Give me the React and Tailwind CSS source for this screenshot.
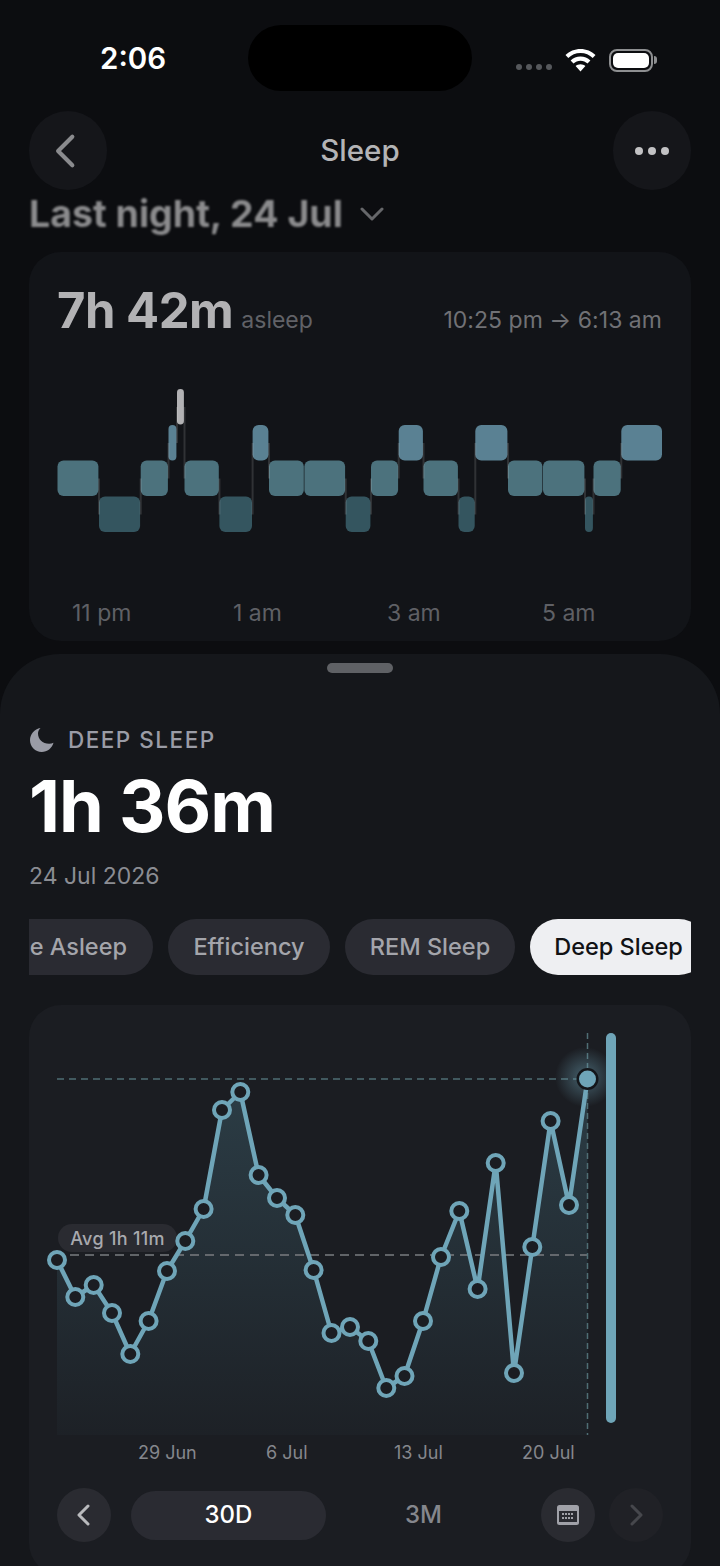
import React from 'react';

const levels = {
  awake: { y: 389, fill: '#b2b2b4' },
  rem: { y: 425, fill: '#5a8193' },
  light: { y: 460.5, fill: '#4c727d' },
  deep: { y: 496.5, fill: '#34555f' },
};

// sleep stages, x range in page pixels
const stages = [
  ['light', 57.5, 99], ['deep', 99, 140.7], ['light', 140.7, 168.5], ['rem', 168.5, 177],
  ['awake', 177, 184.5], ['light', 184.5, 219.4], ['deep', 219.4, 252.6], ['rem', 252.6, 269],
  ['light', 269, 304.4], ['light', 304.4, 345.7], ['deep', 345.7, 371], ['light', 371, 398.7],
  ['rem', 398.7, 423.5], ['light', 423.5, 458.5], ['deep', 458.5, 475.3], ['rem', 475.3, 508],
  ['light', 508, 543], ['light', 543, 585], ['deep', 585, 593.5], ['light', 593.5, 621.3],
  ['rem', 621.3, 662.6],
];

const points = [
  [57, 1260], [75.3, 1297], [93.7, 1285], [112, 1313], [130.3, 1354], [148.6, 1321], [167, 1271],
  [185.3, 1241], [203.6, 1209], [222, 1110], [240.3, 1092], [258.6, 1175], [277, 1198], [295.3, 1215],
  [313.6, 1270], [331.5, 1333], [350, 1327], [368.3, 1341], [386.3, 1388], [404.5, 1376], [423, 1321],
  [441, 1257], [459.3, 1211], [477.6, 1289], [495.7, 1163], [514, 1373], [532.3, 1247], [550.6, 1121],
  [569, 1205], [587.5, 1079],
];

function Hypnogram() {
  return (
    <svg width="608" height="160" viewBox="56 380 608 160" className="block">
      {stages.map(([level, x1, x2], i) => {
        const w = x2 - x1 - 0.6;
        return (
          <rect key={i} x={x1} y={levels[level].y} width={w} height="35.5" rx={Math.min(6, w / 2)} fill={levels[level].fill} />
        );
      })}
      {stages.slice(1).map(([level, x1], i) => {
        const prev = stages[i][0];
        if (prev === level) return null;
        return (
          <line key={i} x1={x1} x2={x1} y1={levels[prev].y + 18} y2={levels[level].y + 18} stroke="#ffffff" strokeOpacity="0.13" strokeWidth="2" />
        );
      })}
    </svg>
  );
}

function TrendChart() {
  const line = points.map((p) => p.join(',')).join(' ');
  const area = `57,1435 ${line} 587.5,1435`;
  return (
    <svg width="662" height="435" viewBox="29 1005 662 435" className="relative block">
      <defs>
        <linearGradient id="areaFill" x1="0" y1="1090" x2="0" y2="1435" gradientUnits="userSpaceOnUse">
          <stop offset="0" stopColor="#5f9fb4" stopOpacity="0.24" />
          <stop offset="1" stopColor="#5f9fb4" stopOpacity="0.03" />
        </linearGradient>
        <radialGradient id="glow">
          <stop offset="0.25" stopColor="#6fa5b8" stopOpacity="0.38" />
          <stop offset="1" stopColor="#6fa5b8" stopOpacity="0" />
        </radialGradient>
      </defs>
      <polygon points={area} fill="url(#areaFill)" />
      <line x1="57" x2="588" y1="1079" y2="1079" stroke="#4f6e74" strokeWidth="1.5" strokeDasharray="7 5" />
      <line x1="70" x2="588" y1="1255" y2="1255" stroke="#7a7c80" strokeWidth="1.5" strokeDasharray="9 6" />
      <line x1="587.5" x2="587.5" y1="1033" y2="1435" stroke="#4f6e74" strokeWidth="1.5" strokeDasharray="6 4" />
      <rect x="606" y="1033" width="10" height="390" rx="5" fill="#6fa5b8" />
      <circle cx="585" cy="1077" r="30" fill="url(#glow)" />
      <polyline points={line} fill="none" stroke="#6fa5b8" strokeWidth="4.5" strokeLinejoin="round" />
      {points.slice(0, -1).map(([x, y], i) => (
        <circle key={i} cx={x} cy={y} r="8" fill="#1b1d22" stroke="#6fa5b8" strokeWidth="4" />
      ))}
      <circle cx="587.5" cy="1079" r="11" fill="#14161a" />
      <circle cx="587.5" cy="1079" r="8.5" fill="#6fa5b8" />
    </svg>
  );
}

function Chevron({ dir = 'left', size = 22, color = '#fff', width = 3 }) {
  return (
    <svg width={size} height={size} viewBox="0 0 24 24" fill="none" stroke={color} strokeWidth={width} strokeLinecap="round" strokeLinejoin="round">
      <path d={dir === 'left' ? 'M16 3 7 12l9 9' : 'M8 3l9 9-9 9'} />
    </svg>
  );
}

export default function App() {
  return (
    <div className="w-[720px] h-[1566px] overflow-hidden bg-[#0c0d10] font-['Inter',sans-serif]">
      {/* status bar */}
      <div className="flex items-center pt-[25px]">
        <div className="w-[248px] pl-[100px] pt-[2px] text-[29.5px] leading-none font-semibold text-white">2:06</div>
        <div className="w-[224px] h-[66px] rounded-full bg-black" />
        <div className="flex items-center pl-[44px] pt-[4px]">
          <div className="flex gap-[4px] mt-[14px]">
            <span className="w-[6px] h-[6px] rounded-full bg-[#56585c]" />
            <span className="w-[6px] h-[6px] rounded-full bg-[#56585c]" />
            <span className="w-[6px] h-[6px] rounded-full bg-[#56585c]" />
            <span className="w-[6px] h-[6px] rounded-full bg-[#56585c]" />
          </div>
          <svg width="31" height="23" viewBox="0 0 31 23" className="ml-[13px]" fill="#fff">
            <path d="M15.5 0C9.7 0 4.4 2.3.5 6.1l2.8 3C6.4 6 10.7 4.1 15.5 4.1S24.6 6 27.7 9.1l2.8-3C26.6 2.3 21.3 0 15.5 0z" />
            <path d="M15.5 7.6c-3.8 0-7.3 1.5-9.9 4l2.9 3c1.8-1.7 4.3-2.8 7-2.8s5.2 1.1 7 2.8l2.9-3c-2.6-2.5-6.1-4-9.9-4z" />
            <path d="M15.5 15.2c-1.9 0-3.6.7-4.9 1.9l4.9 5.4 4.9-5.4c-1.3-1.2-3-1.9-4.9-1.9z" />
          </svg>
          <div className="ml-[13px] w-[44px] h-[23px] rounded-[8px] border-2 border-[#8e8f91] p-[2px]">
            <div className="w-full h-full rounded-[5px] bg-white" />
          </div>
          <div className="ml-[1px] w-[3px] h-[8px] rounded-r-full bg-[#8e8f91]" />
        </div>
      </div>

      {/* nav */}
      <div className="flex items-center justify-between px-[29px] mt-[20px]">
        <div className="w-[78px] h-[79px] rounded-full bg-[#15161a] flex items-center justify-center pr-[4px]">
          <Chevron size={38} color="#8a8b8e" width={2.6} />
        </div>
        <div className="text-[29.5px] leading-none font-medium text-[#b4b4b6]">Sleep</div>
        <div className="w-[78px] h-[79px] rounded-full bg-[#15161a] flex items-center justify-center gap-[5px]">
          <span className="w-[8px] h-[8px] rounded-full bg-[#c2c2c4]" />
          <span className="w-[8px] h-[8px] rounded-full bg-[#c2c2c4]" />
          <span className="w-[8px] h-[8px] rounded-full bg-[#c2c2c4]" />
        </div>
      </div>

      <div className="flex items-center h-[48px] pl-[29px]">
        <span className="text-[37.5px] leading-none font-bold text-[#8b8b8d] blur-[0.8px]">Last night, 24 Jul</span>
        <svg width="24" height="14" viewBox="0 0 24 14" fill="none" stroke="#66676a" strokeWidth="3" strokeLinecap="round" strokeLinejoin="round" className="ml-[17px]">
          <path d="M2 2l10 10L22 2" />
        </svg>
      </div>

      {/* last night card */}
      <div className="mx-[29px] mt-[14px] h-[389px] rounded-[32px] bg-[#121418] pl-[28px] pr-[29px] pt-[34px]">
        <div className="flex items-baseline justify-between h-[58px]">
          <div className="flex items-baseline">
            <span className="text-[49px] leading-none font-bold text-[#b2b2b4] tracking-[-0.5px]">7h 42m</span>
            <span className="ml-[8px] text-[23px] leading-none text-[#616267]">asleep</span>
          </div>
          <span className="text-[23px] leading-none text-[#707175] tracking-[0.03px]">10:25 pm → 6:13 am</span>
        </div>
        <div className="-ml-[1px] mt-[36px]">
          <Hypnogram />
        </div>
        <div className="flex pl-[15px] mt-[62px] text-[23px] leading-none text-[#5f6065]">
          <span className="w-[161px]">11 pm</span>
          <span className="w-[154px]">1 am</span>
          <span className="w-[155px]">3 am</span>
          <span>5 am</span>
        </div>
      </div>

      {/* bottom sheet */}
      <div className="relative mt-[13px] h-[912px] rounded-t-[60px] bg-[#15171b] pt-[9px]">
        <div className="mx-auto w-[66px] h-[10px] rounded-full bg-[#5f6165]" />
        <div className="flex items-center pl-[30px] mt-[55px] h-[24px]">
          <svg width="24" height="24" viewBox="0 0 24 24" fill="#9a9ca6">
            <path d="M10.5 0C4.4 1 0 6.2 0 12.3 0 18.8 5.2 24 11.7 24c5.6 0 10.3-3.8 11.8-9.2-1.2.6-2.7 1-4.4 1C12.5 15.8 8 11.2 8 5.6 8 3.5 9 1.5 10.5 0z" />
          </svg>
          <span className="ml-[14px] text-[22.5px] leading-none font-medium tracking-[1.5px] text-[#9a9ca6]">DEEP SLEEP</span>
        </div>
        <div className="pl-[29px] mt-[14px] text-[72px] leading-[80px] font-bold text-white tracking-[-1px]">1h 36m</div>
        <div className="pl-[29px] mt-[18px] text-[23px] leading-[24px] text-[#8b8d93]">24 Jul 2026</div>

        {/* metric tabs */}
        <div className="mx-[29px] mt-[31px] overflow-hidden">
          <div className="flex gap-[15px] -ml-[59px] w-[800px]">
            <div className="shrink-0 w-[183px] h-[56px] rounded-full bg-[#2a2b32] flex items-center justify-end pr-[26px] text-[23.5px] font-medium text-[#a4a5ab]">Time Asleep</div>
            <div className="shrink-0 w-[162px] h-[56px] rounded-full bg-[#2a2b32] flex items-center justify-center text-[23.5px] font-medium text-[#a4a5ab]">Efficiency</div>
            <div className="shrink-0 w-[170px] h-[56px] rounded-full bg-[#2a2b32] flex items-center justify-center text-[23.5px] font-medium text-[#a4a5ab]">REM Sleep</div>
            <div className="shrink-0 w-[177px] h-[56px] rounded-full bg-[#eeeff2] flex items-center justify-center text-[23.5px] font-medium text-[#111215]">Deep Sleep</div>
          </div>
        </div>

        {/* trend card */}
        <div className="relative mx-[29px] mt-[30px] h-[570px] rounded-[32px] bg-[#1b1d22]">
          <div className="absolute left-[29px] top-[219px] h-[28px] w-[119px] rounded-full bg-[#2a2b31] flex items-center justify-center pt-[1px] text-[18px] leading-none font-medium tracking-[0.3px] text-[#a8a9ae]">Avg 1h 11m</div>
          <TrendChart />
          <div className="flex pl-[109px] mt-[1px] text-[18px] leading-[24px] text-[#85878d]">
            <span className="w-[128px]">29 Jun</span>
            <span className="w-[128px]">6 Jul</span>
            <span className="w-[128px]">13 Jul</span>
            <span>20 Jul</span>
          </div>
          <div className="flex items-center pl-[28px] mt-[23px]">
            <div className="w-[54px] h-[54px] rounded-full bg-[#2a2b31] flex items-center justify-center">
              <Chevron size={24} color="#b9babd" width={3} />
            </div>
            <div className="ml-[20px] w-[195px] h-[49px] rounded-full bg-[#2a2b32] flex items-center justify-center text-[24px] font-medium text-white">30D</div>
            <div className="w-[195px] h-[49px] flex items-center justify-center text-[24px] font-medium text-[#85878d]">3M</div>
            <div className="ml-[20px] w-[54px] h-[54px] rounded-full bg-[#2a2b31] flex items-center justify-center">
              <svg width="22" height="20" viewBox="0 0 22 20">
                <rect width="22" height="20" rx="2.5" fill="#a0a1a8" />
                <rect x="2" y="6" width="18" height="11" fill="#2a2b31" />
                <g fill="#a0a1a8">
                  <rect x="5" y="8" width="2" height="2" /><rect x="8" y="8" width="2" height="2" /><rect x="11" y="8" width="2" height="2" /><rect x="14" y="8" width="2" height="2" />
                  <rect x="5" y="12" width="2" height="2" /><rect x="8" y="12" width="2" height="2" /><rect x="11" y="12" width="2" height="2" /><rect x="14" y="12" width="2" height="2" />
                </g>
              </svg>
            </div>
            <div className="ml-[14px] w-[54px] h-[54px] rounded-full bg-[#202126] flex items-center justify-center">
              <Chevron dir="right" size={24} color="#46474c" width={3} />
            </div>
          </div>
        </div>
      </div>
    </div>
  );
}
